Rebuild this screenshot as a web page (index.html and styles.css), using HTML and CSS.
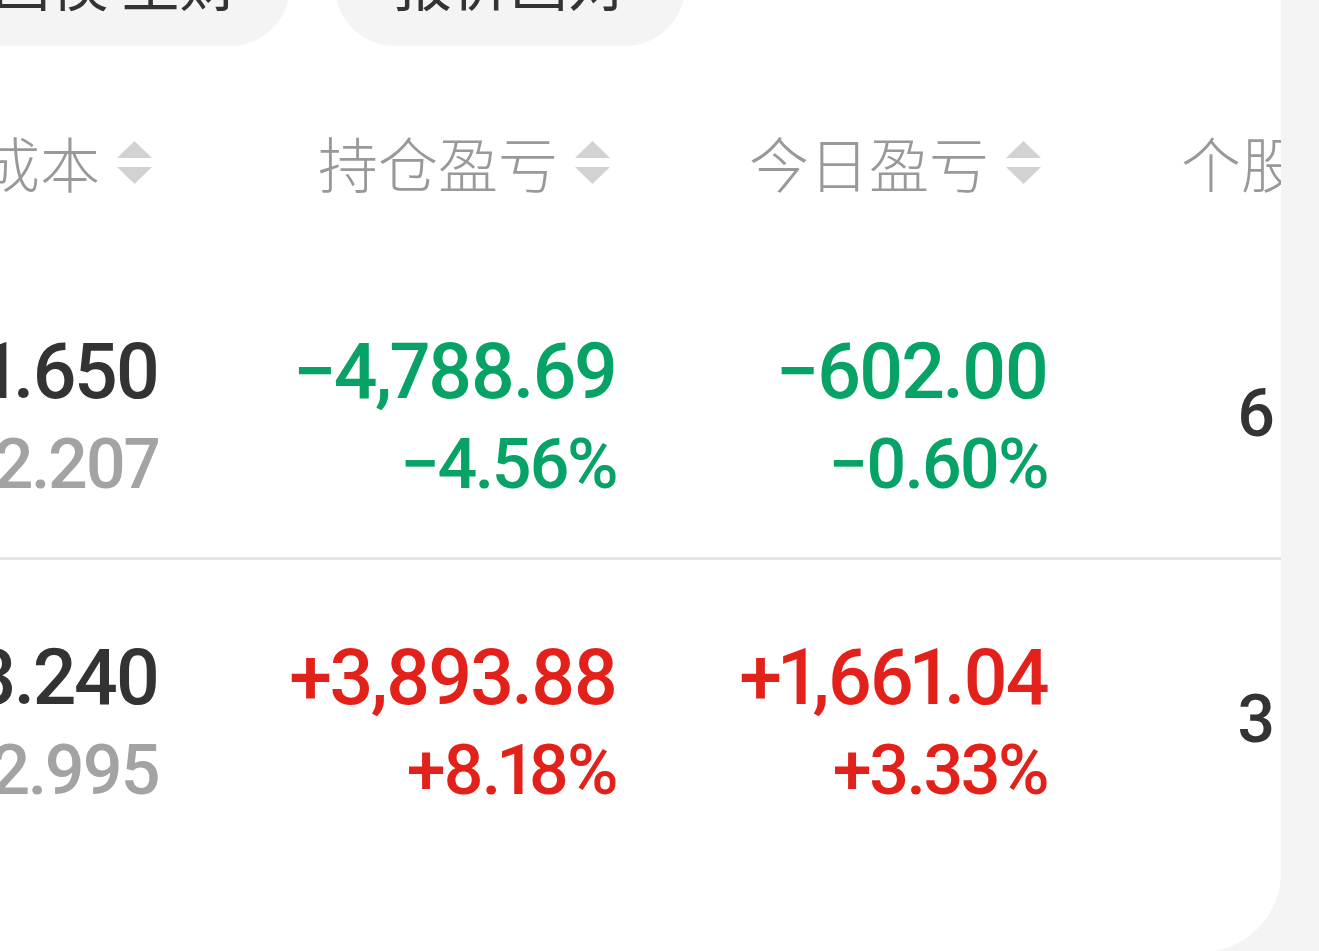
FILE: index.html
```html
<!DOCTYPE html>
<html lang="zh-CN">
<head>
  <meta charset="UTF-8">
  <title>持仓</title>
  <link rel="stylesheet" href="styles.css">
</head>
<body>

  <div class="tarjeta">

    <!-- pestañas de arriba, casi fuera de la pantalla -->
    <div class="pastillas">
      <div class="pastilla">画模 生财</div>
      <div class="pastilla">报价画对</div>
    </div>

    <!-- cabecera de la tabla -->
    <div class="fila cabecera">
      <div class="celda">现价/成本<svg class="orden" viewBox="0 0 35 43"><path d="M17.5 0 L35 17 L0 17 Z M0 26 L35 26 L17.5 43 Z"/></svg></div>
      <div class="celda">持仓盈亏<svg class="orden" viewBox="0 0 35 43"><path d="M17.5 0 L35 17 L0 17 Z M0 26 L35 26 L17.5 43 Z"/></svg></div>
      <div class="celda">今日盈亏<svg class="orden" viewBox="0 0 35 43"><path d="M17.5 0 L35 17 L0 17 Z M0 26 L35 26 L17.5 43 Z"/></svg></div>
      <div class="celda ultima">个股仓位</div>
    </div>

    <div class="fila datos con-linea">
      <div class="celda"><span class="principal">21.650</span><span class="secundario">22.207</span></div>
      <div class="celda verde"><span class="principal">−4,788.69</span><span class="secundario">−4.56%</span></div>
      <div class="celda verde"><span class="principal">−602.00</span><span class="secundario">−0.60%</span></div>
      <div class="celda solo"><span class="cantidad">6</span></div>
    </div>

    <div class="fila datos">
      <div class="celda"><span class="principal">53.240</span><span class="secundario">52.995</span></div>
      <div class="celda rojo"><span class="principal">+3,893.88</span><span class="secundario">+8.18%</span></div>
      <div class="celda rojo"><span class="principal">+1,661.04</span><span class="secundario">+3.33%</span></div>
      <div class="celda solo"><span class="cantidad">3</span></div>
    </div>

  </div>

</body>
</html>
```

FILE: styles.css
```css
body {
  margin: 0;
  background-color: #f4f4f4;
  overflow: hidden;
  font-family: "Noto Sans CJK SC", "Noto Sans", sans-serif;
}
.tarjeta {
  width: 1281px;
  height: 952px;
  background-color: #fff;
  border-bottom-right-radius: 80px;
  overflow: hidden;
}
.pastillas {
  display: flex;
  gap: 45px;
  margin-top: -84px;
  margin-left: -60px;
}
.pastilla {
  width: 350px;
  height: 130px;
  border-radius: 60px;
  background-color: #f4f4f4;
  color: #333;
  font-size: 58px;
  display: flex;
  align-items: center;
  justify-content: center;
  white-space: nowrap;
}
.fila {
  display: grid;
  grid-template-columns: 300px 458px 431px 234px;
  margin-left: -142px;
}
.cabecera {
  padding: 76px 0 52px;
}
.cabecera .celda {
  display: flex;
  align-items: center;
  justify-content: flex-end;
  height: 80px;
  line-height: 80px;
  padding-right: 6px;
  font-size: 60px;
  font-weight: 300;
  color: #999;
  white-space: nowrap;
}
.cabecera .ultima {
  justify-content: flex-start;
  padding-left: 134px;
  padding-right: 0;
}
.orden {
  width: 35px;
  height: 43px;
  margin-left: 17px;
  fill: #d2d2d2;
  flex-shrink: 0;
}
.datos {
  padding: 73px 0 46px;
  font-family: Roboto, "Liberation Sans", sans-serif;
  font-weight: 500;
  font-variant-numeric: proportional-nums;
}
.con-linea {
  border-bottom: 3px solid #e6e6e6;
}
.datos .celda {
  display: flex;
  flex-direction: column;
  align-items: flex-end;
  text-align: right;
  white-space: nowrap;
}
.principal {
  font-size: 77px;
  line-height: 90px;
  letter-spacing: -2.5px;
  color: #333;
}
.secundario {
  font-size: 70px;
  line-height: 94px;
  letter-spacing: -2.5px;
  color: #a3a3a3;
}
.verde .principal, .verde .secundario {
  color: #07a266;
}
.rojo .principal, .rojo .secundario {
  color: #e3211b;
}
.datos .solo {
  justify-content: center;
  padding-right: 6px;
}
.cantidad {
  font-size: 66px;
  line-height: 66px;
  color: #333;
  margin-bottom: 10px;
}
```
